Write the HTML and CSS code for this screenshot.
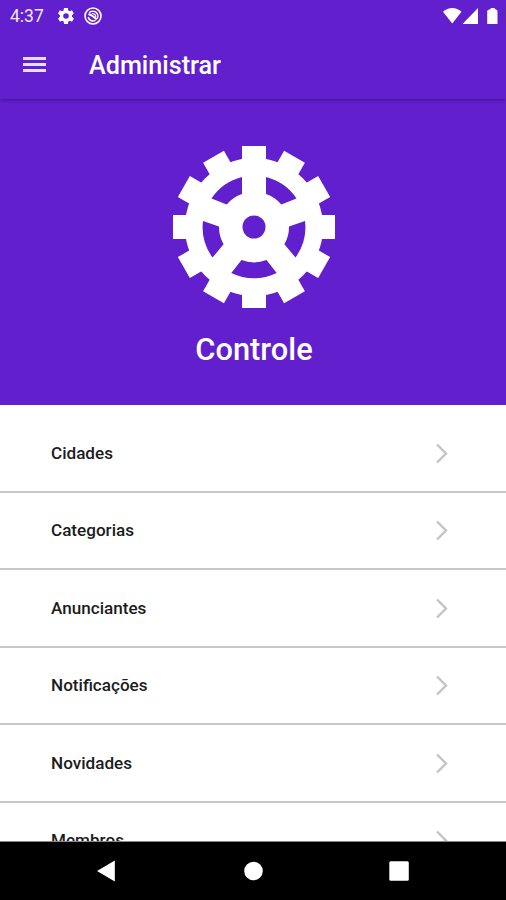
FILE: index.html
```
<!DOCTYPE html>
<html lang="pt-BR">
<head>
  <meta charset="UTF-8">
  <meta name="viewport" content="width=device-width, initial-scale=1.0">
  <title>Administrar</title>
  <link rel="stylesheet" href="styles.css">
</head>
<body>
  <div class="screen">
    <div class="status-bar">
      <div class="status-left">
        <span class="clock">4:37</span>
        <svg class="icon-settings" viewBox="2 2 20 20" width="16" height="16">
          <path fill="currentColor" d="M19.4 13c0-.3.1-.6.1-1s0-.7-.1-1l2.100-1.700c.2-.1.200-.4.100-.6l-2-3.500c-.1-.2-.4-.3-.6-.2l-2.500 1c-.5-.4-1.100-.7-1.700-1l-.4-2.600c0-.2-.2-.4-.5-.4h-4c-.2 0-.4.200-.5.4l-.4 2.600c-.6.3-1.200.6-1.700 1l-2.500-1c-.2-.1-.5 0-.6.2l-2 3.500c-.1.200-.1.500.1.600L4.500 11c0 .3-.1.700-.1 1s0 .7.100 1l-2.100 1.700c-.2.100-.2.400-.1.600l2 3.500c.1.200.4.300.6.200l2.500-1c.5.400 1.100.7 1.700 1l.4 2.600c0 .2.200.4.500.4h4c.2 0 .5-.2.500-.4l.4-2.600c.6-.3 1.200-.6 1.700-1l2.500 1c.2.100.5 0 .6-.2l2-3.500c.1-.2.100-.5-.1-.6L19.400 13zM12 15.500a3.500 3.500 0 1 1 0-7 3.500 3.500 0 0 1 0 7z"/>
        </svg>
        <svg class="icon-sync" viewBox="0 0 18 18" width="18" height="18" fill="none" stroke="currentColor">
          <circle cx="9" cy="9" r="8" stroke-width="1.600"/>
          <path stroke-width="1.500" d="M5.200 5.800A5 5 0 0 1 13.200 11.700M11.500 13.400A5 5 0 0 1 4.200 10"/>
          <path stroke-width="2" d="M4.500 7L8 8.500L12.800 12.500"/>
          <path stroke-width="1.200" d="M8 6.300L11 7.500L12 10"/>
        </svg>
      </div>
      <div class="status-right">
        <svg viewBox="0 0 56 18" width="56" height="18" fill="currentColor">
          <path d="M1 4.800C6-.3 14.500-.3 19.500 4.800L10.250 16.500z"/>
          <path d="M36 1v16h-15.500z"/>
          <path d="M47.500 2.200h1.200V1h4v1.200h1.200l1.600 1.500v13.300H45.200V3.700z"/>
        </svg>
      </div>
    </div>

    <div class="app-bar">
      <button class="menu-btn" aria-label="Menu">
        <span></span>
        <span></span>
        <span></span>
      </button>
      <h1>Administrar</h1>
    </div>

    <div class="hero">
      <svg class="gear" viewBox="-82 -82 164 164" width="164" height="164">
        <defs>
          <rect id="tooth" x="-12" y="-81" width="24" height="20"/>
        </defs>
        <g fill="#fff">
          <use href="#tooth"/>
          <use href="#tooth" transform="rotate(30)"/>
          <use href="#tooth" transform="rotate(60)"/>
          <use href="#tooth" transform="rotate(90)"/>
          <use href="#tooth" transform="rotate(120)"/>
          <use href="#tooth" transform="rotate(150)"/>
          <use href="#tooth" transform="rotate(180)"/>
          <use href="#tooth" transform="rotate(210)"/>
          <use href="#tooth" transform="rotate(240)"/>
          <use href="#tooth" transform="rotate(270)"/>
          <use href="#tooth" transform="rotate(300)"/>
          <use href="#tooth" transform="rotate(330)"/>
          <circle r="69"/>
        </g>
        <!-- openings between the spokes -->
        <g class="gear-holes">
          <circle r="11.500"/>
          <path d="M-12-50A51.500 51.500 0 0 0-42.500-28.500L-27.300-22.500A35 35 0 0 1-12-32.900z"/>
          <path d="M12-50A51.500 51.500 0 0 1 42.500-28.500L27.300-22.500A35 35 0 0 0 12-32.900z"/>
          <path d="M-51-6A51.500 51.500 0 0 0-41.500 30.600L-30.400 17.300A35 35 0 0 1-35-.5z"/>
          <path d="M51-6A51.500 51.500 0 0 1 41.500 30.600L30.400 17.300A35 35 0 0 0 35-.5z"/>
          <path d="M-22.700 46A51.500 51.500 0 0 0 22.700 46L12.500 33A35 35 0 0 1-12.500 33z"/>
        </g>
      </svg>
      <h2>Controle</h2>
    </div>

    <div class="menu-list">
      <div class="menu-item">
        <span>Cidades</span>
        <svg class="chevron" viewBox="0 0 14 22" width="14" height="22"><path d="M2 2.500l9 9-9 9"/></svg>
      </div>
      <div class="menu-item">
        <span>Categorias</span>
        <svg class="chevron" viewBox="0 0 14 22" width="14" height="22"><path d="M2 2.500l9 9-9 9"/></svg>
      </div>
      <div class="menu-item">
        <span>Anunciantes</span>
        <svg class="chevron" viewBox="0 0 14 22" width="14" height="22"><path d="M2 2.500l9 9-9 9"/></svg>
      </div>
      <div class="menu-item">
        <span>Notificações</span>
        <svg class="chevron" viewBox="0 0 14 22" width="14" height="22"><path d="M2 2.500l9 9-9 9"/></svg>
      </div>
      <div class="menu-item">
        <span>Novidades</span>
        <svg class="chevron" viewBox="0 0 14 22" width="14" height="22"><path d="M2 2.500l9 9-9 9"/></svg>
      </div>
      <div class="menu-item">
        <span>Membros</span>
        <svg class="chevron" viewBox="0 0 14 22" width="14" height="22"><path d="M2 2.500l9 9-9 9"/></svg>
      </div>
    </div>

    <div class="nav-bar">
      <svg viewBox="0 0 20 22" width="20" height="22" fill="currentColor"><path d="M0 11L17.800.5v21z"/></svg>
      <svg viewBox="0 0 20 22" width="20" height="22" fill="currentColor"><circle cx="10.500" cy="11" r="9.300"/></svg>
      <svg viewBox="0 0 20 22" width="20" height="22" fill="currentColor"><rect x=".3" y="1.300" width="19.500" height="19.500" rx="1.500"/></svg>
    </div>
  </div>
</body>
</html>
```
FILE: styles.css
```
* {
  margin: 0;
  padding: 0;
  box-sizing: border-box;
}

body {
  font-family: Roboto, 'Noto Sans', sans-serif;
  background: #fff;
  overflow: hidden;
}

.screen {
  display: flex;
  flex-direction: column;
  height: 900px;
  overflow: hidden;
}

.status-bar {
  flex: none;
  display: flex;
  justify-content: space-between;
  align-items: center;
  height: 31px;
  padding: 0 8px 0 10px;
  background: #611fcd;
  color: #fff;
}

.status-left {
  display: flex;
  align-items: center;
}

.clock {
  width: 48px;
  font-size: 17.5px;
  line-height: 20px;
  color: #f0e8fc;
}

.icon-sync {
  margin-left: 10px;
}

.status-right svg {
  display: block;
}

.app-bar {
  flex: none;
  display: flex;
  align-items: center;
  height: 68px;
  padding-left: 23px;
  background: #611fcd;
  color: #fff;
  box-shadow: 0 1px 4px rgba(0, 0, 0, 0.3);
  clip-path: inset(0 0 -8px 0);
  z-index: 1;
}

.menu-btn {
  display: flex;
  flex-direction: column;
  gap: 3px;
  width: 23px;
  margin-bottom: 1px;
  background: none;
  border: none;
  cursor: pointer;
}

.menu-btn span {
  height: 3px;
  background: #e9defa;
}

.app-bar h1 {
  margin: 1px 0 0 43px;
  font-size: 25.2px;
  font-weight: 500;
  line-height: 30px;
}

.hero {
  flex: none;
  display: flex;
  flex-direction: column;
  align-items: center;
  height: 306px;
  padding: 46px 0 0 2px;
  background: #611fcd;
  color: #fff;
}

.gear-holes {
  fill: #611fcd;
}

.hero h2 {
  margin-top: 22px;
  font-size: 30.8px;
  font-weight: 500;
  line-height: 38px;
}

.menu-list {
  flex: 1;
  min-height: 0;
  padding-top: 10px;
  overflow: hidden;
}

.menu-item {
  display: flex;
  justify-content: space-between;
  align-items: center;
  height: 77.5px;
  padding: 0 57px 0 51px;
  border-bottom: 2px solid #c8c8c8;
  color: #1c1c1c;
  font-size: 17.1px;
  font-weight: 500;
}

.chevron path {
  fill: none;
  stroke: #c4c4c4;
  stroke-width: 2.400;
}

.nav-bar {
  flex: none;
  display: flex;
  justify-content: center;
  gap: 126px;
  height: 59px;
  padding-top: 18px;
  border-top: 1px solid #888;
  background: #000;
  color: #fff;
}
```
